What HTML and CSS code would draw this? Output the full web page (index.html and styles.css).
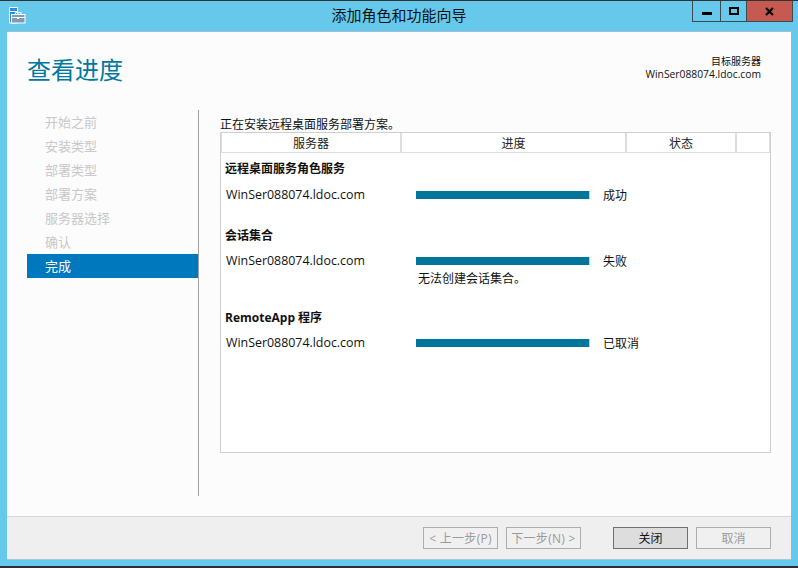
FILE: index.html
```html
<!DOCTYPE html>
<html lang="zh">
<head>
<meta charset="utf-8">
<title>添加角色和功能向导</title>
<link rel="stylesheet" href="styles.css">
</head>
<body>
<div class="window">
  <header class="caption">
    <svg class="app-icon" width="17" height="17" viewBox="0 0 17 17">
      <path d="M.500.500h8v15.500h-8z" fill="#2b8ee0" stroke="#fff"/>
      <path d="M1 4.500h7" stroke="#fff"/>
      <rect x="2.500" y="7.500" width="13.500" height="8.500" fill="#7d9db5" stroke="#fff"/>
      <path d="M6.500 7.500v-2h5.500v2" fill="none" stroke="#fff"/>
      <path d="M3 10.500h13" stroke="#fff"/>
      <path d="M8 10h2v2h-2z" fill="#fff"/>
    </svg>
    <div class="caption-title">添加角色和功能向导</div>
    <div class="controls">
      <div class="ctl ctl-min"><span class="glyph-min"></span></div>
      <div class="ctl ctl-max"><span class="glyph-max"></span></div>
      <div class="ctl ctl-close"><svg width="9" height="9" viewBox="0 0 9 9"><path d="M1 1l7 7M8 1l-7 7" stroke="#000" stroke-width="2.200"/></svg></div>
    </div>
  </header>
  <div class="client">
    <main class="page">
      <div class="page-head">
        <h1 class="page-title">查看进度</h1>
        <div class="target">
          <div class="target-label">目标服务器</div>
          <div>WinSer088074.ldoc.com</div>
        </div>
      </div>
      <div class="page-body">
        <nav class="steps">
          <div class="step">开始之前</div>
          <div class="step">安装类型</div>
          <div class="step">部署类型</div>
          <div class="step">部署方案</div>
          <div class="step">服务器选择</div>
          <div class="step">确认</div>
          <div class="step step-on">完成</div>
        </nav>
        <section class="content">
          <p class="intro">正在安装远程桌面服务部署方案。</p>
          <div class="table">
            <div class="thead">
              <div class="th th-server">服务器</div>
              <div class="th th-progress">进度</div>
              <div class="th th-status">状态</div>
              <div class="th th-end"></div>
            </div>
            <div class="group">
              <div class="group-name">远程桌面服务角色服务</div>
              <div class="row">
                <div class="server">WinSer088074.ldoc.com</div>
                <div class="bar"></div>
                <div class="status">成功</div>
              </div>
            </div>
            <div class="group group-2">
              <div class="group-name">会话集合</div>
              <div class="row">
                <div class="server">WinSer088074.ldoc.com</div>
                <div class="bar"></div>
                <div class="status">失败</div>
              </div>
              <div class="error">无法创建会话集合。</div>
            </div>
            <div class="group group-3">
              <div class="group-name">RemoteApp 程序</div>
              <div class="row">
                <div class="server">WinSer088074.ldoc.com</div>
                <div class="bar"></div>
                <div class="status">已取消</div>
              </div>
            </div>
          </div>
        </section>
      </div>
    </main>
    <footer class="footer">
      <button class="btn btn-off">&lt; 上一步(P)</button>
      <button class="btn btn-off btn-next">下一步(N) &gt;</button>
      <button class="btn btn-default">关闭</button>
      <button class="btn btn-off btn-cancel">取消</button>
    </footer>
  </div>
</div>
<div class="below"></div>
</body>
</html>
```
FILE: styles.css
```css
* { box-sizing: border-box; }
html, body { margin: 0; padding: 0; height: 568px; overflow: hidden; background: #2e2e2e; }
body, button {
  font-family: "Open Sans", "Noto Sans CJK SC", sans-serif;
  font-size: 12px;
  color: #000;
}
.window {
  height: 566px;
  background: #66c9ec;
  border-top: 1px solid #333;
  padding: 0 7px 7px;
  display: flex;
  flex-direction: column;
}
.caption {
  height: 30px;
  flex: none;
  margin: 0 -7px;
  position: relative;
  display: flex;
  justify-content: center;
}
.app-icon { position: absolute; left: 9px; top: 6px; }
.caption-title {
  font-size: 15px;
  line-height: 20px;
  margin-top: 4px;
  color: #111;
}
.controls {
  position: absolute;
  right: 5px;
  top: 0;
  height: 21px;
  display: flex;
  border: 1px solid #3c4a52;
  border-top: 0;
}
.ctl {
  height: 20px;
  display: flex;
  align-items: center;
  justify-content: center;
}
.ctl-min { width: 28px; border-right: 1px solid #3c4a52; }
.ctl-max { width: 26px; border-right: 1px solid #3c4a52; }
.ctl-close { width: 45px; background: #c75a50; }
.glyph-min { width: 10px; height: 3px; background: #000; margin-top: 4px; }
.glyph-max { width: 10px; height: 8px; border: 2px solid #000; }
.client {
  flex: 1;
  display: flex;
  flex-direction: column;
  background: #fcfcfc;
  border-top: 1px solid #9fc2d2;
  box-shadow: 0 1px 0 #a9c9d8;
}
.page { flex: 1; padding: 0 20px; display: flex; flex-direction: column; }
.page-head {
  height: 78px;
  flex: none;
  display: flex;
  justify-content: space-between;
  padding-right: 10px;
}
.page-title {
  margin: 20px 0 0;
  font-size: 24px;
  line-height: 36px;
  font-weight: 400;
  color: #00789c;
}
.target {
  margin-top: 23px;
  text-align: right;
  font-size: 10.300px;
  line-height: 13px;
  color: #111;
}
.target-label { font-size: 10px; }
.page-body { flex: 1; display: flex; }
.steps {
  flex: none;
  box-sizing: content-box;
  width: 171px;
  height: 386px;
  border-right: 1px solid #a0a0a0;
}
.step {
  height: 24px;
  width: 171px;
  padding-left: 18px;
  font-size: 13px;
  line-height: 24px;
  color: #c8c8c8;
}
.step-on { background: #0078bd; color: #fff; }
.content { margin-left: 21px; width: 551px; }
.intro { margin: 6px 0 0; height: 16px; line-height: 17px; white-space: nowrap; color: #111; }
.table {
  height: 321px;
  background: #fff;
  border: 1px solid #cfcfcf;
}
.thead {
  height: 20px;
  display: flex;
  border-bottom: 1px solid #dedede;
  text-align: center;
  line-height: 21px;
  color: #222;
}
.th { border-right: 2px solid #dedede; height: 19px; border-left: 1px solid #dedede; }
.th-server { width: 181px; }
.th-progress { width: 226px; margin-left: -1px; }
.th-status { width: 111px; margin-left: -1px; }
.th-end { flex: 1; margin-left: -1px; border-right: 1px solid #dedede; }
.group { padding: 7px 0 0 4px; }
.group-2 { padding-top: 24px; }
.group-3 { padding-top: 22px; }
.group-name { font-weight: 700; line-height: 17px; color: #111; }
.row { display: flex; align-items: center; margin-top: 9px; height: 17px; }
.group-2 .row, .group-3 .row { margin-top: 8px; }
.server { width: 191px; padding-left: 1px; font-size: 12.400px; white-space: nowrap; color: #111; }
.bar {
  width: 174px;
  height: 8px;
  background: #00769a;
  border-right: 1px solid #c8ccce;
}
.status { margin-left: 13px; color: #111; }
.error { margin: 1px 0 0 193px; line-height: 17px; color: #111; }
.footer {
  height: 43px;
  flex: none;
  background: #efefef;
  border-top: 1px solid #d6d6d6;
  display: flex;
  align-items: flex-start;
  padding: 10px 20px 0 416px;
}
.btn {
  width: 75px;
  height: 22px;
  padding: 1px 0 0;
  background: #f0f0f0;
  border: 1px solid #adadad;
  font-size: 12px;
  line-height: 18px;
  color: #9a9a9a;
}
.btn-off { letter-spacing: 0.300px; }
.btn-next { margin-left: 8px; }
.btn-default {
  margin-left: 32px;
  background: #dddddd;
  border-color: #707070;
  color: #111;
}
.btn-cancel { margin-left: 8px; letter-spacing: 0; }
.below { height: 2px; }
```
